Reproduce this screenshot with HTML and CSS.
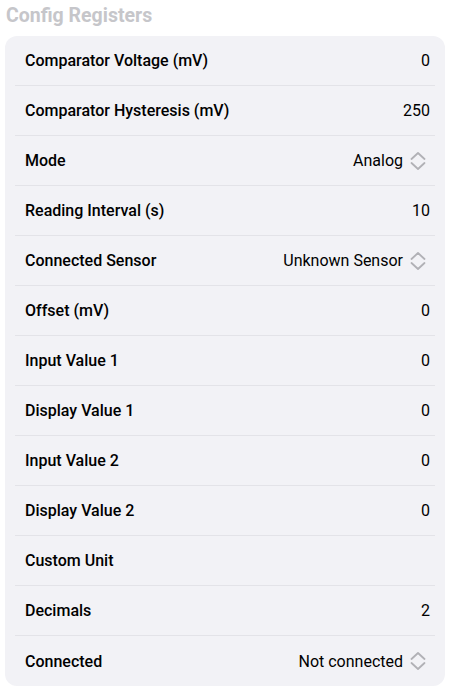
FILE: index.html
```html
<!doctype html>
<html>
    <head>
        <meta charset="utf-8">
        <title>Config Registers</title>
        <link rel="stylesheet" href="styles.css">
    </head>

    <body>
        <h2 class="section-title">Config Registers</h2>

        <div class="register-list">
            <div class="register-row">
                <span class="register-label">Comparator Voltage (mV)</span>
                <span class="register-value">0</span>
            </div>
            <div class="register-row">
                <span class="register-label">Comparator Hysteresis (mV)</span>
                <span class="register-value">250</span>
            </div>
            <div class="register-row">
                <span class="register-label">Mode</span>
                <span class="register-value select">Analog
                    <svg class="chevrons" viewBox="0 0 16 18"><path d="M1.5 7 8 1 14.5 7M1.5 11 8 17 14.5 11"/></svg>
                </span>
            </div>
            <div class="register-row">
                <span class="register-label">Reading Interval (s)</span>
                <span class="register-value">10</span>
            </div>
            <div class="register-row">
                <span class="register-label">Connected Sensor</span>
                <span class="register-value select">Unknown Sensor
                    <svg class="chevrons" viewBox="0 0 16 18"><path d="M1.5 7 8 1 14.5 7M1.5 11 8 17 14.5 11"/></svg>
                </span>
            </div>
            <div class="register-row">
                <span class="register-label">Offset (mV)</span>
                <span class="register-value">0</span>
            </div>
            <div class="register-row">
                <span class="register-label">Input Value 1</span>
                <span class="register-value">0</span>
            </div>
            <div class="register-row">
                <span class="register-label">Display Value 1</span>
                <span class="register-value">0</span>
            </div>
            <div class="register-row">
                <span class="register-label">Input Value 2</span>
                <span class="register-value">0</span>
            </div>
            <div class="register-row">
                <span class="register-label">Display Value 2</span>
                <span class="register-value">0</span>
            </div>
            <div class="register-row">
                <span class="register-label">Custom Unit</span>
                <span class="register-value"></span>
            </div>
            <div class="register-row">
                <span class="register-label">Decimals</span>
                <span class="register-value">2</span>
            </div>
            <div class="register-row">
                <span class="register-label">Connected</span>
                <span class="register-value select">Not connected
                    <svg class="chevrons" viewBox="0 0 16 18"><path d="M1.5 7 8 1 14.5 7M1.5 11 8 17 14.5 11"/></svg>
                </span>
            </div>
        </div>
    </body>
</html>
```

FILE: styles.css
```css
body {
    margin: 0;
    background: #ffffff;
    font-family: Roboto, 'Noto Sans', sans-serif;
    color: #000000;
}

.section-title {
    margin: 0 0 8px 6px;
    padding-top: 4px;
    font-size: 19.5px;
    line-height: 24px;
    font-weight: 700;
    color: #c6c6ca;
}

.register-list {
    width: 440px;
    margin: 0 0 4px 5px;
    background: #f2f2f6;
    border-radius: 12px;
    overflow: hidden;
}

.register-row {
    display: flex;
    align-items: center;
    justify-content: space-between;
    height: 49px;
    margin: 0 10px;
    padding: 0 5px 0 10px;
    border-bottom: 1px solid #e3e3e8;
    font-size: 16px;
}

.register-row:last-child {
    border-bottom: none;
    height: 50px;
}

.register-label {
    font-weight: 500;
}

.register-value {
    display: flex;
    align-items: center;
    font-weight: 400;
}

.chevrons {
    width: 16px;
    height: 18px;
    margin: 0 4px 0 7px;
    fill: none;
    stroke: #b1b1b6;
    stroke-width: 1.8;
    stroke-linecap: round;
    stroke-linejoin: round;
}
```
